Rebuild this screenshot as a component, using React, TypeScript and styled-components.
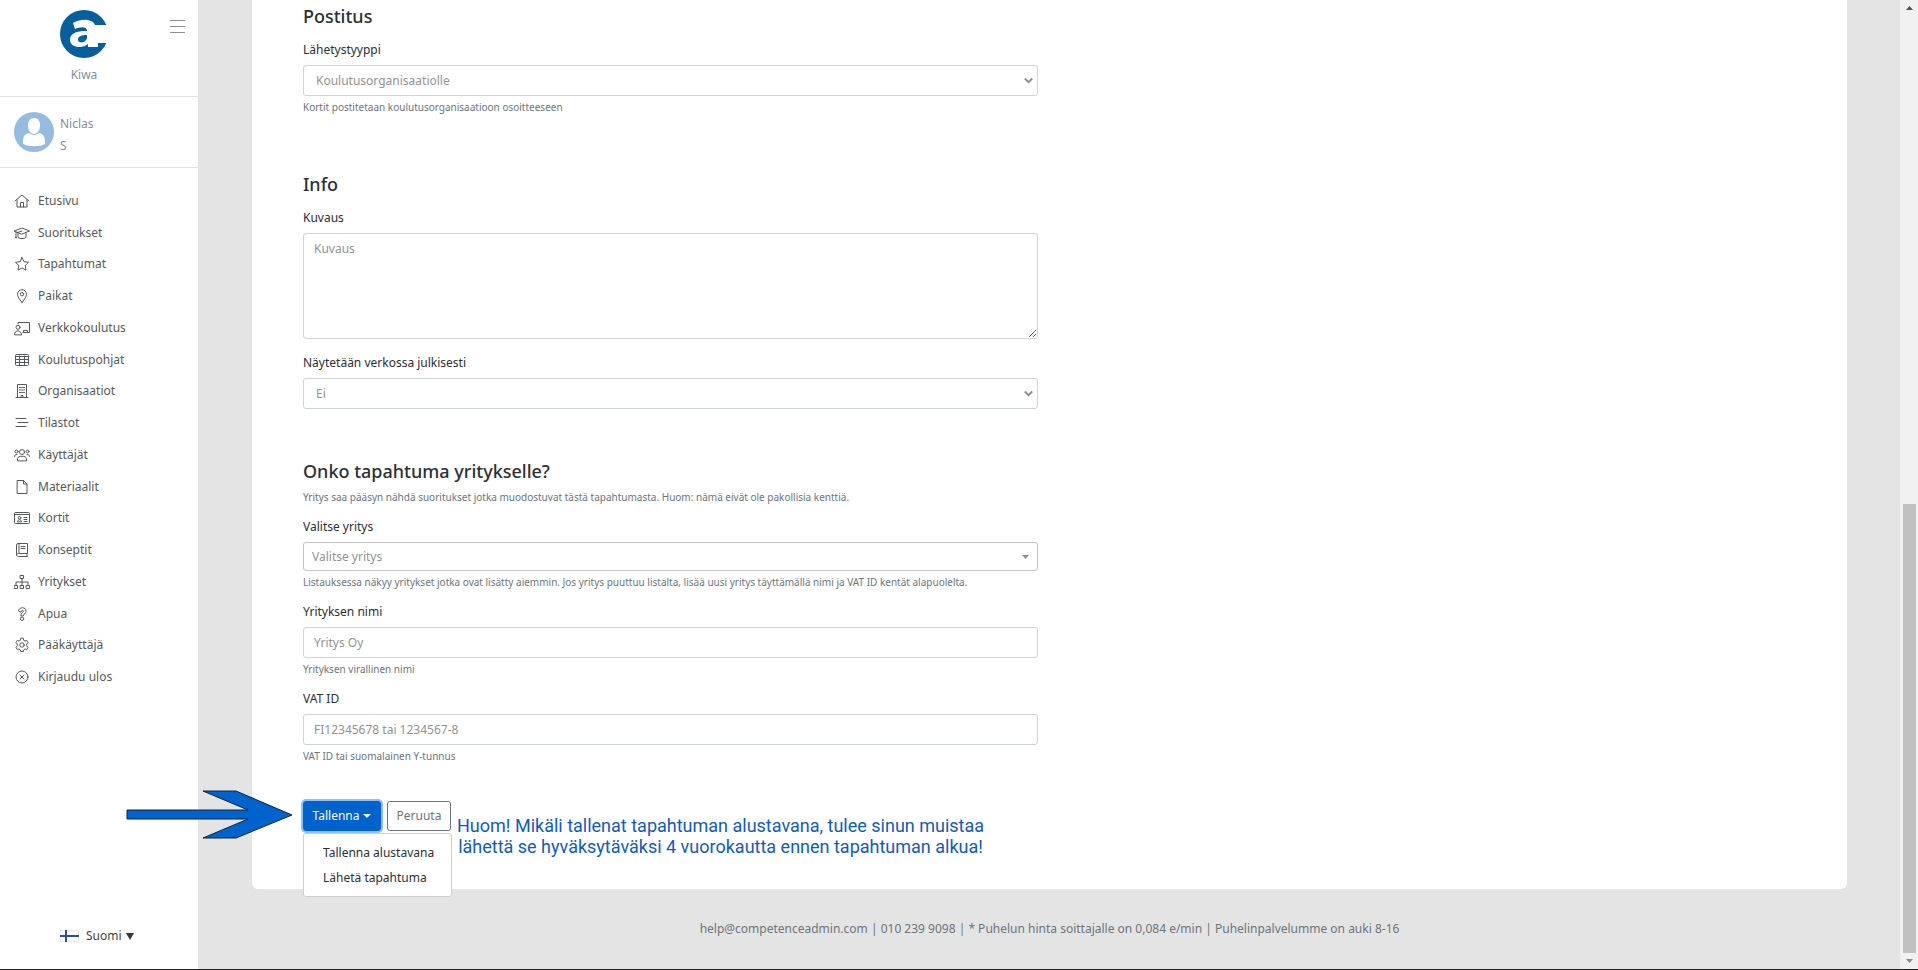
import React, { useState } from "react";
import styled, { createGlobalStyle } from "styled-components";

const GlobalStyle = createGlobalStyle`
  *, *::before, *::after { box-sizing: border-box; }
  body {
    margin: 0;
    background: #e4e4e4;
    color: #2c3034;
    font-family: "Noto Sans", "Open Sans", sans-serif;
    font-size: 12px;
    line-height: 20px;
  }
  button, input, select, textarea { font: inherit; }
`;

const Page = styled.div`
  position: relative;
  display: flex;
  min-height: 100vh;
  border-bottom: 1px solid #1f2128;
`;

const Sidebar = styled.aside`
  display: flex;
  flex-direction: column;
  flex: none;
  width: 198px;
  background: #fff;
  color: #56595c;
`;

const Brand = styled.header`
  display: grid;
  grid-template-columns: 30px 1fr 30px;
  justify-items: center;
  align-items: start;
  height: 97px;
  padding: 10px 6px 0 0;
  border-bottom: 1px solid #dee2e6;
  color: #868e96;
`;

const BrandName = styled.div`
  display: flex;
  flex-direction: column;
  align-items: center;
  gap: 7px;
  grid-column: 2;
  padding-right: 24px;
`;

const MenuButton = styled.button`
  display: block;
  margin-top: 9px;
  padding: 0;
  border: 0;
  background: none;
  color: #8a8f94;
  line-height: 0;
`;

const Profile = styled.div`
  display: flex;
  gap: 6px;
  height: 71px;
  padding: 15px 14px 0;
  border-bottom: 1px solid #dee2e6;
  color: #868e96;
  line-height: 22px;
`;

const ProfileName = styled.div`
  display: flex;
  flex-direction: column;
  padding-top: 1px;
`;

const Menu = styled.nav`
  display: grid;
  grid-auto-rows: 1fr;
  height: 508px;
  margin: 17px 0 auto;
`;

const MenuLink = styled.a`
  display: flex;
  align-items: center;
  gap: 8px;
  padding-left: 14px;
  color: inherit;
  text-decoration: none;
`;

const Glyph = styled.svg`
  display: block;
  flex: none;
  width: 16px;
  height: 16px;
  fill: none;
  stroke: currentColor;
  stroke-linejoin: round;
  stroke-linecap: round;
`;

const Language = styled.button`
  display: flex;
  align-items: center;
  gap: 7px;
  margin: 0 0 23px 60px;
  padding: 0;
  border: 0;
  background: none;
  color: #3f4347;
`;

const LanguageName = styled.span`
  display: flex;
  align-items: center;
  gap: 4px;
`;

const Main = styled.main`
  flex: 1;
  min-width: 0;
  padding: 0 53px 0 54px;
`;

const Card = styled.section`
  display: grid;
  grid-template-columns: 1fr 1fr;
  column-gap: 23px;
  padding: 4px 51px 57px;
  border-radius: 0 0 6px 6px;
  background: #fff;
`;

const Form = styled.form`
  display: flex;
  flex-direction: column;
`;

const Group = styled.fieldset<{ $after: number }>`
  display: flex;
  flex-direction: column;
  gap: 12px;
  min-width: 0;
  margin: 0 0 ${(p) => p.$after}px;
  padding: 0;
  border: 0;
`;

const Title = styled.h2`
  margin: 0;
  font-size: 18px;
  font-weight: 500;
  line-height: 24px;
`;

const Field = styled.div`
  display: flex;
  flex-direction: column;
`;

const Label = styled.label`
  margin-bottom: 5px;
`;

const Help = styled.small<{ $lead?: boolean }>`
  margin-top: ${(p) => (p.$lead ? "6px" : "3px")};
  color: #6c757d;
  font-size: 10px;
  line-height: 16px;
`;

const Control = styled.input`
  width: 100%;
  height: 31px;
  padding: 0 10px;
  border: 1px solid #ced4da;
  border-radius: 3px;
  background: #fff;
  color: #939393;
  &::placeholder { color: #939393; opacity: 1; }
`;

const Area = styled(Control).attrs({ as: "textarea" })`
  display: block;
  height: 106px;
  margin-bottom: 2px;
  padding: 5px 10px;
  resize: vertical;
`;

const SelectWrap = styled.div`
  position: relative;
`;

const Select = styled(Control).attrs({ as: "select" })<{ $search?: boolean }>`
  display: block;
  height: ${(p) => (p.$search ? "29px" : "31px")};
  padding: 0 ${(p) => (p.$search ? "8px" : "12px")};
  border-color: ${(p) => (p.$search ? "#c4c4c4" : "#ced4da")};
  appearance: none;
`;

const Chevron = styled.svg<{ $search?: boolean }>`
  position: absolute;
  top: 0;
  bottom: 0;
  right: ${(p) => (p.$search ? "8px" : "5px")};
  margin: auto 0;
  pointer-events: none;
`;

const Actions = styled.div`
  display: flex;
  align-items: flex-start;
  gap: 6px;
  height: 31px;
`;

const Dropdown = styled.div`
  position: relative;
`;

const Button = styled.button<{ $primary?: boolean }>`
  display: flex;
  align-items: center;
  justify-content: center;
  gap: 4px;
  width: ${(p) => (p.$primary ? "78px" : "64px")};
  height: 30px;
  padding: 0;
  border: 1px solid ${(p) => (p.$primary ? "#0062cc" : "#6c757d")};
  border-radius: 3px;
  background: ${(p) => (p.$primary ? "#0062cc" : "#fff")};
  color: ${(p) => (p.$primary ? "#fff" : "#6c757d")};
  box-shadow: ${(p) => (p.$primary ? "0 0 0 2px #8ec1f8" : "none")};
`;

const Caret = styled.span`
  border: 4px solid transparent;
  border-top-color: currentColor;
  border-bottom: 0;
`;

const Options = styled.div`
  position: absolute;
  z-index: 2;
  top: 32px;
  left: 0;
  display: flex;
  flex-direction: column;
  width: 149px;
  padding: 6px 0;
  border: 1px solid #cfcfcf;
  border-radius: 3px;
  background: #fff;
`;

const Option = styled.button`
  height: 25px;
  padding: 0 0 0 19px;
  border: 0;
  background: none;
  color: #2c3034;
  text-align: left;
  white-space: nowrap;
`;

const Note = styled.p`
  margin: 14px 0 0;
  color: #0f5cc0;
  font-family: Roboto, "Liberation Sans", sans-serif;
  font-size: 18px;
  line-height: 21px;
  text-align: center;
  white-space: nowrap;
`;

const Footer = styled.footer`
  padding: 30px 0;
  color: #6c757d;
  text-align: center;
`;

const Pointer = styled.svg`
  position: absolute;
  z-index: 3;
  top: 789px;
  left: 126px;
`;

const Scrollbar = styled.div`
  display: flex;
  flex-direction: column;
  align-items: center;
  justify-content: space-between;
  flex: none;
  width: 18px;
  padding: 6px 0;
  background: #f1f1f1;
`;

const Thumb = styled.div`
  width: 13px;
  height: 449px;
  margin: auto 0 6px;
  background: #c1c1c1;
`;

const icons: Record<string, React.ReactNode> = {
  home: <path d="M1 8 8 2l7 6M3 6.500V14h10V6.500M6.500 14V9.500h3V14" />,
  cap: <><path d="M.5 6 8 3l7.500 3L8 9zM4 8v4.500c2 1.500 6 1.500 8 0V8M2 6.700V12M1 13l1-1 .5 1M8 6 3.500 7.500" /></>,
  star: <path d="m8 1.500 2 4.200 4.500.6-3.300 3.200.8 4.600L8 11.900l-4 2.200.8-4.600L1.500 6.300 6 5.700z" />,
  pin: <><path d="M8 14.500C5 10.500 3.500 8.500 3.500 6.200a4.500 4.500 0 0 1 9 0C12.500 8.500 11 10.500 8 14.500z" /><circle cx="8" cy="6.200" r="1.700" /></>,
  teacher: <><path d="M4 4V2.500h11.500v10H9" /><circle cx="4" cy="7.300" r="2" /><path d="M.5 14.500c0-5 7-5 7 0zM9.500 12.500v-2h4v2" /></>,
  table: <><rect x="1.500" y="2.500" width="13" height="11" rx="1" /><path d="M1.500 4.500h13M1.500 7.500h13M1.500 10.500h13M5.500 4v9.500M10.500 4v9.500" /></>,
  building: <><path d="M2 14.500h12M3.500 14.500v-13h9v13M7 14.500v-2h2v2" /><path d="M5.500 4.500h1M7.500 4.500h1M9.500 4.500h1M5.500 7h1M7.500 7h1M9.500 7h1M5.500 9.500h1M7.500 9.500h1M9.500 9.500h1" /></>,
  stream: <path d="M2 3.500h10M4 7.500h10M2 11.500h10" />,
  users: <><circle cx="8" cy="5" r="2.500" /><circle cx="2.500" cy="4.500" r="1.500" /><circle cx="13.500" cy="4.500" r="1.500" /><path d="M3.500 13.500v-2c0-3 9-3 9 0v2zM.5 9.500c0-1.500.8-2 2.500-2M15.500 9.500c0-1.500-.8-2-2.500-2" /></>,
  file: <path d="M3.500 1.500h6l3.500 3.500v9.500H3.500zM9.500 1.500V5H13" />,
  card: <><rect x=".5" y="2.500" width="15" height="11" rx="1" /><path d="M.5 4.500h15M3.500 11.500c0-2.500 4-2.500 4 0zM10 7.500h3M10 9.500h3M10 11.500h3" /><circle cx="5.500" cy="7.800" r="1.300" /></>,
  book: <path d="M4 1.500h9.500v10H4.500c-2.500 0-2.500 3 0 3h9M2.500 13V3A1.500 1.500 0 0 1 4 1.500M5 1.500v10M7 4.500h4M7 6.500h4M13 11.500v3" />,
  sitemap: <path d="M6.500 1.500h3v3h-3zM.5 11.500h3v3h-3zM6.500 11.500h3v3h-3zM12.500 11.500h3v3h-3zM8 4.500v7M2 11.500V8h12v3.500" />,
  question: <><path d="M4.500 4.500C5 .8 12 .5 12 5c0 2.800-2.700 2.800-2.700 5H6.800c0-3.500 2.500-3.500 2.500-5 0-1-1.800-1-2.300.8z" /><circle cx="8" cy="12.800" r="1.700" /></>,
  cog: <><path d="m6.700 1.500-.4 1.800-1.300.7-1.700-.6L2 5.700 3.300 7v1.800L2 10.300l1.300 2.300 1.700-.6 1.300.8.4 1.700h2.600l.4-1.700 1.300-.8 1.700.6 1.300-2.300-1.300-1.500V7L14 5.700l-1.300-2.300L11 4l-1.300-.7-.4-1.800z" /><circle cx="8" cy="8" r="2.200" /></>,
  exit: <><circle cx="8" cy="8" r="6" /><path d="m6 6 4 4M10 6l-4 4" /></>,
};

const menu: [string, string][] = [
  ["home", "Etusivu"],
  ["cap", "Suoritukset"],
  ["star", "Tapahtumat"],
  ["pin", "Paikat"],
  ["teacher", "Verkkokoulutus"],
  ["table", "Koulutuspohjat"],
  ["building", "Organisaatiot"],
  ["stream", "Tilastot"],
  ["users", "Käyttäjät"],
  ["file", "Materiaalit"],
  ["card", "Kortit"],
  ["book", "Konseptit"],
  ["sitemap", "Yritykset"],
  ["question", "Apua"],
  ["cog", "Pääkäyttäjä"],
  ["exit", "Kirjaudu ulos"],
];

function Logo() {
  return (
    <svg width="48" height="48" viewBox="0 0 48 48" aria-hidden="true">
      <circle cx="24" cy="24" r="24" fill="#045f9c" />
      <path d="M33 15h15v18H36z" fill="#fff" />
      <path
        d="M13 13c6-4.500 23-6 23 6v13h2v5H28v-3c-5 5-18 4-18-4 0-8 9-9 17-9 0-5-7-4-12-2z"
        fill="#fff"
      />
      <path d="M27 25c-5 0-9 1-9 4.500 0 5 9 3 9-2z" fill="#045f9c" />
    </svg>
  );
}

function Avatar() {
  return (
    <svg width="40" height="40" viewBox="0 0 40 40" aria-hidden="true">
      <circle cx="20" cy="20" r="20" fill="#95bbe0" />
      <path d="M20 6c4 0 6 3 6 7.500S23.500 22 20 22s-6-4-6-8.500S16 6 20 6z" fill="#fff" />
      <path d="M9 32c0-7 1-10 6-11 3 2.500 7 2.500 10 0 5 1 6 4 6 11-6 3-16 3-22 0z" fill="#fff" />
    </svg>
  );
}

function Picker({ id, text, search }: { id: string; text: string; search?: boolean }) {
  return (
    <SelectWrap>
      <Select id={id} $search={search}>
        <option>{text}</option>
      </Select>
      <Chevron $search={search} width="9" height="7" viewBox="0 0 9 7" aria-hidden="true">
        {search ? (
          <path d="M1 2h7L4.500 6z" fill="#8f8f8f" />
        ) : (
          <path d="m.8 1.500 3.700 3.700 3.700-3.700" fill="none" stroke="#8f8f8f" strokeWidth="2" />
        )}
      </Chevron>
    </SelectWrap>
  );
}

export default function App() {
  const [open, setOpen] = useState(true);
  return (
    <>
      <GlobalStyle />
      <Page>
        <Sidebar>
          <Brand>
            <BrandName>
              <Logo />
              <span>Kiwa</span>
            </BrandName>
            <MenuButton aria-label="Valikko">
              <svg width="15" height="14" viewBox="0 0 15 14" stroke="currentColor">
                <path d="M0 1.500h15M0 7.500h15M0 13.500h15" />
              </svg>
            </MenuButton>
          </Brand>
          <Profile>
            <Avatar />
            <ProfileName>
              <span>Niclas</span>
              <span>S</span>
            </ProfileName>
          </Profile>
          <Menu>
            {menu.map(([icon, text]) => (
              <MenuLink href="#" key={text}>
                <Glyph viewBox="0 0 16 16" aria-hidden="true">{icons[icon]}</Glyph>
                {text}
              </MenuLink>
            ))}
          </Menu>
          <Language>
            <svg width="19" height="12" viewBox="0 0 19 12" aria-hidden="true">
              <path d="M.5.5h18v11H.5z" fill="#fff" stroke="#e3e5ee" />
              <path d="M0 6h19M6 0v12" stroke="#2f4ba0" strokeWidth="2" />
            </svg>
            <LanguageName>
              Suomi
              <svg width="8" height="8" viewBox="0 0 8 8" aria-hidden="true">
                <path d="M0 1h8L4 8z" fill="#33373b" />
              </svg>
            </LanguageName>
          </Language>
        </Sidebar>
        <Main>
          <Card>
            <Form onSubmit={(e) => e.preventDefault()}>
              <Group $after={57}>
                <Title>Postitus</Title>
                <Field>
                  <Label htmlFor="type">Lähetystyyppi</Label>
                  <Picker id="type" text="Koulutusorganisaatiolle" />
                  <Help>Kortit postitetaan koulutusorganisaatioon osoitteeseen</Help>
                </Field>
              </Group>
              <Group $after={50}>
                <Title>Info</Title>
                <Field>
                  <Label htmlFor="description">Kuvaus</Label>
                  <Area id="description" placeholder="Kuvaus" />
                </Field>
                <Field>
                  <Label htmlFor="public">Näytetään verkossa julkisesti</Label>
                  <Picker id="public" text="Ei" />
                </Field>
              </Group>
              <Group $after={37}>
                <Field>
                  <Title>Onko tapahtuma yritykselle?</Title>
                  <Help $lead>
                    Yritys saa pääsyn nähdä suoritukset jotka muodostuvat tästä tapahtumasta. Huom: nämä eivät ole
                    pakollisia kenttiä.
                  </Help>
                </Field>
                <Field>
                  <Label htmlFor="company">Valitse yritys</Label>
                  <Picker id="company" text="Valitse yritys" search />
                  <Help>
                    Listauksessa näkyy yritykset jotka ovat lisätty aiemmin. Jos yritys puuttuu listalta, lisää uusi
                    yritys täyttämällä nimi ja VAT ID kentät alapuolelta.
                  </Help>
                </Field>
                <Field>
                  <Label htmlFor="name">Yrityksen nimi</Label>
                  <Control id="name" placeholder="Yritys Oy" />
                  <Help>Yrityksen virallinen nimi</Help>
                </Field>
                <Field>
                  <Label htmlFor="vat">VAT ID</Label>
                  <Control id="vat" placeholder="FI12345678 tai 1234567-8" />
                  <Help>VAT ID tai suomalainen Y-tunnus</Help>
                </Field>
              </Group>
              <Actions>
                <Dropdown>
                  <Button type="button" $primary aria-expanded={open} onClick={() => setOpen(!open)}>
                    Tallenna
                    <Caret />
                  </Button>
                  {open && (
                    <Options>
                      <Option type="button">Tallenna alustavana</Option>
                      <Option type="button">Lähetä tapahtuma</Option>
                    </Options>
                  )}
                </Dropdown>
                <Button type="button">Peruuta</Button>
                <Note>
                  Huom! Mikäli tallenat tapahtuman alustavana, tulee sinun muistaa
                  <br />
                  lähettä se hyväksytäväksi 4 vuorokautta ennen tapahtuman alkua!
                </Note>
              </Actions>
            </Form>
          </Card>
          <Footer>
            help@competenceadmin.com | 010 239 9098 | * Puhelun hinta soittajalle on 0,084 e/min | Puhelinpalvelumme on
            auki 8-16
          </Footer>
        </Main>
        <Scrollbar aria-hidden="true">
          <svg width="7" height="4"><path d="M0 4h7L3.500 0z" fill="#505050" /></svg>
          <Thumb />
          <svg width="7" height="4"><path d="M0 0h7L3.500 4z" fill="#8a8a8a" /></svg>
        </Scrollbar>
        <Pointer width="168" height="52" viewBox="0 0 168 52" aria-hidden="true">
          <path
            d="M1 21h121L77 2h33l56 24-56 23H77l45-19H1z"
            fill="#0062cc"
            stroke="#10243c"
          />
        </Pointer>
      </Page>
    </>
  );
}
